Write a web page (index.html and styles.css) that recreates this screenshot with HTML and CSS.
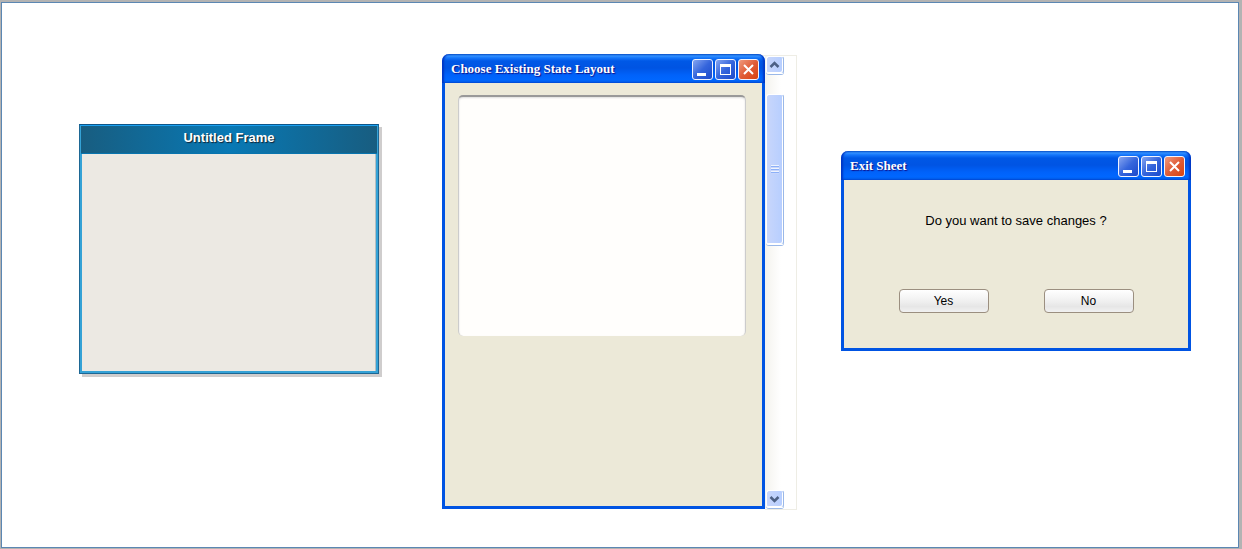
FILE: index.html
```html
<!DOCTYPE html>
<html lang="en">
<head>
<meta charset="utf-8">
<title>State Layout</title>
<link rel="stylesheet" href="styles.css">
</head>
<body>
<main class="desktop">
  <section class="frame" aria-label="Untitled Frame">
    <h2 class="frame-title">Untitled Frame</h2>
    <div class="frame-body"></div>
  </section>

  <div class="scroll-pane">
    <section class="window chooser">
      <header class="titlebar">
        <h2 class="title">Choose Existing State Layout</h2>
        <button class="control" aria-label="Minimize"><svg viewBox="0 0 19 19"><path fill="#fff" d="M4 13h9v3H4z"/></svg></button>
        <button class="control" aria-label="Maximize"><svg viewBox="0 0 19 19"><path fill="#fff" fill-rule="evenodd" d="M4 4h11v11H4zM5 7v7h9V7z"/></svg></button>
        <button class="control close" aria-label="Close"><svg viewBox="0 0 19 19"><path stroke="#fff" stroke-width="2" d="M5 5l9 9M14 5l-9 9"/></svg></button>
      </header>
      <div class="window-body chooser-body">
        <div class="layout-list"></div>
      </div>
    </section>
    <div class="scrollbar">
      <button class="arrow" aria-label="Scroll up"><svg viewBox="0 0 16 16"><path fill="none" stroke="#4d6185" stroke-width="2.500" d="M3.500 10l4-4 4 4"/></svg></button>
      <div class="thumb"><span class="grip"></span></div>
      <button class="arrow arrow-down" aria-label="Scroll down"><svg viewBox="0 0 16 16"><path fill="none" stroke="#4d6185" stroke-width="2.500" d="M3.500 6l4 4 4-4"/></svg></button>
    </div>
  </div>

  <section class="window dialog">
    <header class="titlebar">
      <h2 class="title">Exit Sheet</h2>
      <button class="control" aria-label="Minimize"><svg viewBox="0 0 19 19"><path fill="#fff" d="M4 13h9v3H4z"/></svg></button>
      <button class="control" aria-label="Maximize"><svg viewBox="0 0 19 19"><path fill="#fff" fill-rule="evenodd" d="M4 4h11v11H4zM5 7v7h9V7z"/></svg></button>
      <button class="control close" aria-label="Close"><svg viewBox="0 0 19 19"><path stroke="#fff" stroke-width="2" d="M5 5l9 9M14 5l-9 9"/></svg></button>
    </header>
    <div class="window-body dialog-body">
      <p class="message">Do you want to save changes ?</p>
      <div class="actions">
        <button class="action">Yes</button>
        <button class="action">No</button>
      </div>
    </div>
  </section>
</main>
</body>
</html>
```
FILE: styles.css
```css
* { box-sizing: border-box; }

body {
  display: flex;
  min-height: 100vh;
  margin: 0;
  padding: 2px 3px 1px 1px;
  background: #b3b3b3;
  font-family: "Liberation Sans", Arial, sans-serif;
}

h2, p { margin: 0; }

button { padding: 0; font-family: inherit; }

svg { display: block; width: 100%; height: 100%; }

.desktop {
  position: relative;
  flex: 1;
  border: 1px solid #5b87b3;
  background: #fff;
}

/* Windows placed freely on the desktop */
.frame, .scroll-pane, .dialog { position: absolute; }

.frame {
  left: 77px;
  top: 121px;
  display: flex;
  flex-direction: column;
  width: 300px;
  height: 250px;
  border: 1px solid #1d6794;
  border-top-color: #0c568a;
  background: linear-gradient(#1ba0f0 0 1px, #35a2d6 1px);
  padding: 1px;
  box-shadow: 3px 3px 0 #cfcdcd;
}

.frame-title {
  height: 28px;
  padding-bottom: 4px;
  border-bottom: 1px solid #0874ae;
  background: linear-gradient(90deg, #185d80, #0879b5 50%, #185d80);
  color: #fff;
  font-size: 13px;
  line-height: 24px;
  text-align: center;
  text-shadow: 1px 1px 1px #123;
}

.frame-body {
  flex: 1;
  margin: 0 1px 1px;
  border-right: 1px solid #b6bfc2;
  background: #ece9e3;
}

.scroll-pane {
  left: 440px;
  top: 51px;
  display: flex;
  width: 355px;
  height: 456px;
  background: linear-gradient(#eeede5, #eeede5) right 0 top 1px / 1px 100% no-repeat,
    linear-gradient(#eeede5, #eeede5) right 0 top 1px / 40px 1px no-repeat,
    linear-gradient(#eeede5, #eeede5) right 0 bottom 0 / 32px 1px no-repeat;
}

.window { display: flex; flex-direction: column; }

.chooser { flex: 1; margin-bottom: 1px; }

.titlebar {
  display: flex;
  align-items: center;
  gap: 2px;
  height: 29px;
  padding: 2px 6px 0 9px;
  border-radius: 7px 7px 0 0;
  background: linear-gradient(#0b54c8 0, #3290ff 2px, #1475fa 4px, #0058e6 7px, #0054e3 14px, #0062fa 21px, #0067ff 26px, #005be8 28px, #0046d5);
  box-shadow: inset 3px 0 2px -1px #0037c5, inset -3px 0 2px -1px #0037c5;
}

.title {
  flex: 1;
  padding-bottom: 2px;
  color: #fff;
  font: bold 13px/16px "Liberation Serif", "Times New Roman", serif;
  text-shadow: 1px 1px 1px #0f1089;
}

.control {
  width: 21px;
  height: 21px;
  border: 1px solid #f0f3ff;
  border-radius: 3px;
  background: linear-gradient(135deg, #86a5f0, #3565dc 50%, #1c4acb);
}

.close { background: linear-gradient(135deg, #ef9a7e, #e05d38 50%, #d84310); }

.window-body {
  flex: 1;
  border: 3px solid #0054e3;
  border-top: 0;
  background: #ece9d8;
}

.chooser-body { padding: 12px 16px 12px 13px; }

.layout-list {
  height: 241px;
  border: 1px solid #ccc;
  border-top: 2px solid #999;
  border-bottom: 0;
  border-radius: 5px;
  background: #fffefc;
  box-shadow: inset 0 1px 2px #ddd;
}

.scrollbar {
  display: flex;
  flex-direction: column;
  width: 19px;
  margin: 2px 13px 2px 0;
  padding-left: 1px;
  background: linear-gradient(90deg, #f4f3ee, #fff 85%);
}

.arrow, .thumb {
  width: 18px;
  border: 1px solid #fff;
  border-right-color: #9ab8e8;
  border-radius: 3px;
  background: linear-gradient(90deg, #c8d6fb, #b6ceff);
  box-shadow: inset -1px -1px 0 #fff, 0 1px 0 #9ab8e8;
}

.arrow { height: 18px; }

.thumb {
  display: flex;
  align-items: center;
  justify-content: center;
  height: 151px;
  margin-top: 20px;
  padding-right: 1px;
}

.grip {
  width: 8px;
  height: 9px;
  background: repeating-linear-gradient(#eef4fe 0 1px, #8cb0f8 1px 2px, #c8d6fb 2px 3px);
}

.arrow-down { margin-top: auto; }

.dialog {
  left: 839px;
  top: 148px;
  width: 350px;
  height: 200px;
}

.dialog-body {
  display: flex;
  flex-direction: column;
  align-items: center;
  gap: 60px;
  padding-top: 32px;
}

.message { font-size: 13px; line-height: 17px; }

.actions { display: flex; gap: 55px; }

.action {
  width: 90px;
  height: 24px;
  border: 1px solid #9b8f80;
  border-radius: 4px;
  background: linear-gradient(#fff, #f0f0f0 50%, #e6e6e6 75%, #f1f1f1);
  color: #000;
  font-size: 12px;
}
```
